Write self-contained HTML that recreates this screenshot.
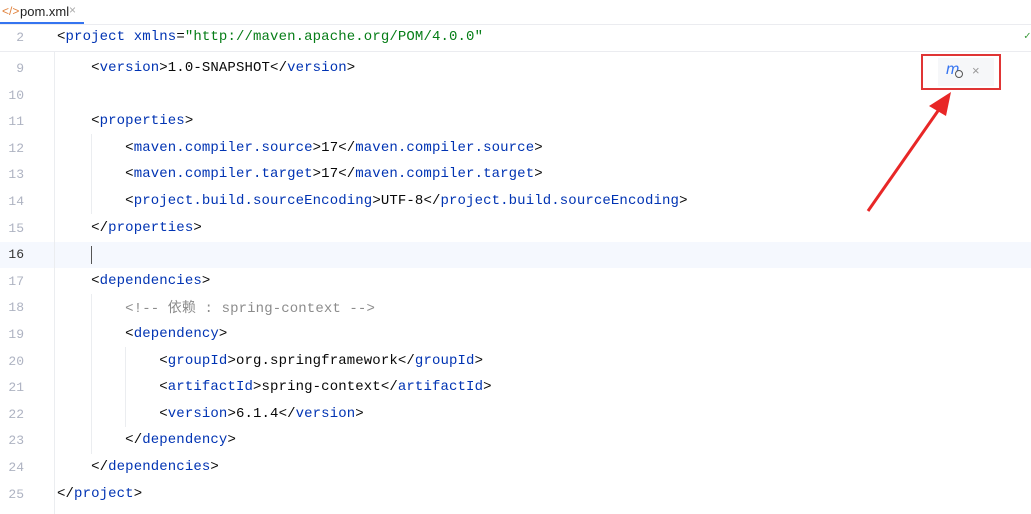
<!DOCTYPE html><html><head><style>
body{margin:0;width:1031px;height:514px;overflow:hidden;background:#fff;font-family:"Liberation Mono",monospace;font-size:14px;letter-spacing:0.12px;position:relative}
.tabbar{position:absolute;left:0;top:0;width:1031px;height:24px;border-bottom:1px solid #ebecf0}
.tab{position:absolute;left:0;top:0;width:84px;height:24px;border-bottom:2px solid #3574f0;box-sizing:border-box;font-family:"Liberation Sans",sans-serif;font-size:13px;color:#222;letter-spacing:0}
.l{position:absolute;left:0;width:1031px;height:26.6px;line-height:27.6px;white-space:pre;color:#080808}
.n{position:absolute;left:0;width:24px;text-align:right;color:#aeb3c2;font-size:13px;letter-spacing:0}
.c{position:absolute;left:57px}
.t{color:#0033b3}.s{color:#067d17}.m{color:#8c8c8c}
.g{position:absolute;width:1px;background:#ebedf0}
</style></head><body>
<div class="tabbar"></div>
<div class="tab"><span style="position:absolute;left:2px;top:4px;color:#e0823d;font-size:12px">&lt;/&gt;</span><span style="position:absolute;left:20px;top:4px">pom.xml</span><span style="position:absolute;left:69px;top:3px;color:#aaa;font-size:12px">×</span></div>
<div class="l" style="top:24px;height:27px;line-height:27px;border-bottom:1px solid #ebecf0"><span class="n">2</span><span class="c">&lt;<span class="t">project </span><span class="t">xmlns</span>=<span class="s">"http://maven.apache.org/POM/4.0.0"</span></span><span style="position:absolute;left:1024px;color:#3a9a3a;font-size:11px">✓</span></div>
<div style="position:absolute;left:0;top:242px;width:1031px;height:26px;background:#f5f8fe"></div>
<div class="g" style="left:54px;top:52px;height:462px"></div>
<div class="g" style="left:91px;top:134px;height:80px"></div>
<div class="g" style="left:91px;top:294px;height:160px"></div>
<div class="g" style="left:125px;top:347px;height:80px"></div>
<div style="position:absolute;left:91px;top:246px;width:1px;height:18px;background:#555"></div>
<div class="l" style="top:55px"><span class="n">9</span><span class="c">    &lt;<span class="t">version</span>&gt;1.0-SNAPSHOT&lt;/<span class="t">version</span>&gt;</span></div>
<div class="l" style="top:81.6px"><span class="n">10</span></div>
<div class="l" style="top:108.2px"><span class="n">11</span><span class="c">    &lt;<span class="t">properties</span>&gt;</span></div>
<div class="l" style="top:134.8px"><span class="n">12</span><span class="c">        &lt;<span class="t">maven.compiler.source</span>&gt;17&lt;/<span class="t">maven.compiler.source</span>&gt;</span></div>
<div class="l" style="top:161.4px"><span class="n">13</span><span class="c">        &lt;<span class="t">maven.compiler.target</span>&gt;17&lt;/<span class="t">maven.compiler.target</span>&gt;</span></div>
<div class="l" style="top:188px"><span class="n">14</span><span class="c">        &lt;<span class="t">project.build.sourceEncoding</span>&gt;UTF-8&lt;/<span class="t">project.build.sourceEncoding</span>&gt;</span></div>
<div class="l" style="top:214.6px"><span class="n">15</span><span class="c">    &lt;/<span class="t">properties</span>&gt;</span></div>
<div class="l" style="top:241.2px"><span class="n" style="color:#333">16</span></div>
<div class="l" style="top:267.8px"><span class="n">17</span><span class="c">    &lt;<span class="t">dependencies</span>&gt;</span></div>
<div class="l" style="top:294.4px"><span class="n">18</span><span class="c m">        &lt;!-- <span style="font-family:'Noto Sans CJK SC',sans-serif">依赖</span> : spring-context --&gt;</span></div>
<div class="l" style="top:321px"><span class="n">19</span><span class="c">        &lt;<span class="t">dependency</span>&gt;</span></div>
<div class="l" style="top:347.6px"><span class="n">20</span><span class="c">            &lt;<span class="t">groupId</span>&gt;org.springframework&lt;/<span class="t">groupId</span>&gt;</span></div>
<div class="l" style="top:374.2px"><span class="n">21</span><span class="c">            &lt;<span class="t">artifactId</span>&gt;spring-context&lt;/<span class="t">artifactId</span>&gt;</span></div>
<div class="l" style="top:400.8px"><span class="n">22</span><span class="c">            &lt;<span class="t">version</span>&gt;6.1.4&lt;/<span class="t">version</span>&gt;</span></div>
<div class="l" style="top:427.4px"><span class="n">23</span><span class="c">        &lt;/<span class="t">dependency</span>&gt;</span></div>
<div class="l" style="top:454px"><span class="n">24</span><span class="c">    &lt;/<span class="t">dependencies</span>&gt;</span></div>
<div class="l" style="top:480.6px"><span class="n">25</span><span class="c">&lt;/<span class="t">project</span>&gt;</span></div>
<div style="position:absolute;left:938px;top:58px;width:56px;height:28px;background:#f6f7f9"></div>
<div style="position:absolute;left:946px;top:61px;font-family:'Liberation Sans',sans-serif;font-style:italic;color:#3574f0;font-size:16px">m</div>
<div style="position:absolute;left:955px;top:70px;width:8px;height:8px;border:1.5px solid #555;border-radius:50%;box-sizing:border-box;background:#f6f7f9"></div>
<div style="position:absolute;left:972px;top:63px;color:#999;font-family:'Liberation Sans',sans-serif;font-size:13px">×</div>
<div style="position:absolute;left:921px;top:54px;width:80px;height:36px;border:2px solid #e03535;box-sizing:border-box"></div>
<svg style="position:absolute;left:0;top:0" width="1031" height="514"><line x1="868" y1="211" x2="940" y2="108" stroke="#e82727" stroke-width="3"/><polygon points="951,92 929,106 946,116" fill="#e82727"/></svg>
</body></html>
